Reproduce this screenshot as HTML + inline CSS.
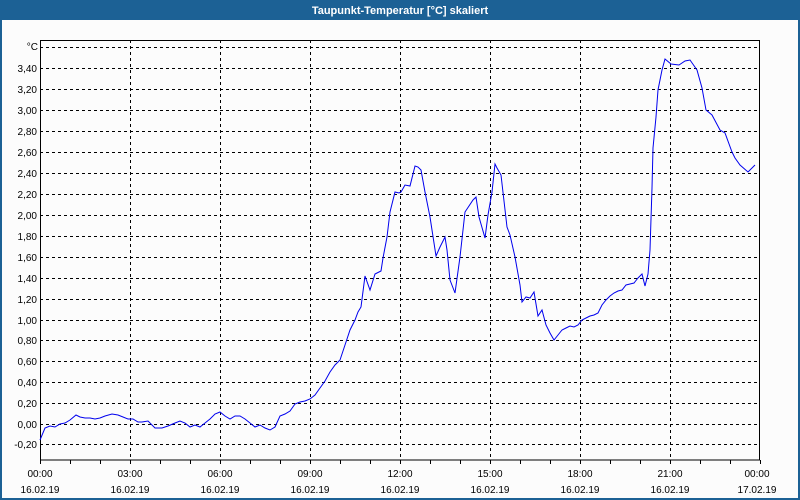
<!DOCTYPE html>
<html><head><meta charset="utf-8"><style>
html,body{margin:0;padding:0;width:800px;height:500px;overflow:hidden;background:#1c6195}
svg{display:block}
text{font-family:"Liberation Sans","DejaVu Sans",sans-serif;font-size:10px;fill:#000}
</style></head><body>
<svg width="800" height="500" viewBox="0 0 800 500">
<rect x="0" y="0" width="800" height="500" fill="#1c6195"/>
<rect x="2" y="20" width="796" height="478" fill="#fcfcfc"/>
<text x="400" y="14" text-anchor="middle" style="font-size:11px;font-weight:bold;fill:#fff">Taupunkt-Temperatur [°C] skaliert</text>
<g stroke="#000" stroke-width="1" stroke-dasharray="3,3" fill="none" shape-rendering="crispEdges">
<line x1="40" y1="47.5" x2="760" y2="47.5"/>
<line x1="40" y1="68.5" x2="760" y2="68.5"/>
<line x1="40" y1="89.5" x2="760" y2="89.5"/>
<line x1="40" y1="110.5" x2="760" y2="110.5"/>
<line x1="40" y1="131.5" x2="760" y2="131.5"/>
<line x1="40" y1="152.5" x2="760" y2="152.5"/>
<line x1="40" y1="173.5" x2="760" y2="173.5"/>
<line x1="40" y1="194.5" x2="760" y2="194.5"/>
<line x1="40" y1="215.5" x2="760" y2="215.5"/>
<line x1="40" y1="236.5" x2="760" y2="236.5"/>
<line x1="40" y1="257.5" x2="760" y2="257.5"/>
<line x1="40" y1="278.5" x2="760" y2="278.5"/>
<line x1="40" y1="299.5" x2="760" y2="299.5"/>
<line x1="40" y1="320.5" x2="760" y2="320.5"/>
<line x1="40" y1="340.5" x2="760" y2="340.5"/>
<line x1="40" y1="361.5" x2="760" y2="361.5"/>
<line x1="40" y1="382.5" x2="760" y2="382.5"/>
<line x1="40" y1="403.5" x2="760" y2="403.5"/>
<line x1="40" y1="424.5" x2="760" y2="424.5"/>
<line x1="40" y1="444.5" x2="760" y2="444.5"/>
<line x1="130.5" y1="40" x2="130.5" y2="460"/>
<line x1="220.5" y1="40" x2="220.5" y2="460"/>
<line x1="310.5" y1="40" x2="310.5" y2="460"/>
<line x1="400.5" y1="40" x2="400.5" y2="460"/>
<line x1="490.5" y1="40" x2="490.5" y2="460"/>
<line x1="580.5" y1="40" x2="580.5" y2="460"/>
<line x1="670.5" y1="40" x2="670.5" y2="460"/>
</g>
<g stroke="#000" stroke-width="1" fill="none" shape-rendering="crispEdges">
<rect x="40.5" y="40.5" width="719" height="419.5"/>
<path d="M40.5 460v4M70.5 460v4M100.5 460v4M130.5 460v4M160.5 460v4M190.5 460v4M220.5 460v4M250.5 460v4M280.5 460v4M310.5 460v4M340.5 460v4M370.5 460v4M400.5 460v4M430.5 460v4M460.5 460v4M490.5 460v4M520.5 460v4M550.5 460v4M580.5 460v4M610.5 460v4M640.5 460v4M670.5 460v4M700.5 460v4M730.5 460v4M760.5 460v4"/>
</g>
<polyline fill="none" stroke="#0000ee" stroke-width="1" points="40,440 45,428 50,426 55,427 60,424 65,423 70,420 76,415 80,417 85,418 90,418 95,419 100,418 105,416 112,414 118,415 123,417 128,419 133,419 138,422 142,422 148,421 155,428 162,428 168,426 175,423 180,421 185,423 190,427 195,425 200,427 205,423 210,419 215,414 220,412 225,416 230,419 235,416 240,416 245,419 250,423 255,427 260,425 265,428 270,430 275,427 280,416 285,414 290,411 295,404 300,402 305,401 310,399 315,395 320,388 325,381 330,372 335,365 340,360 345,345 350,330 355,320 358,312 361,307 365,276 370,290 375,274 377,273 381,271 383,258 387,237 390,212 395,192 399,193 401,192 405,185 410,186 415,166 418,167 421,170 425,192 430,217 436,256 440,247 445,237 447,250 450,280 455,293 460,257 465,212 473,200 476,197 479,217 485,238 488,215 492,192 495,164 497,168 501,175 507,227 510,235 515,257 520,285 522,302 526,297 530,298 534,292 538,316 542,310 546,325 550,333 554,340 558,335 562,330 566,328 570,326 574,327 578,325 582,320 586,318 590,316 594,315 598,313 602,305 606,300 610,296 614,293 618,291 622,290 626,285 630,284 634,283 638,278 642,274 645,286 648,274 650,250 652,188 653,148 656,117 658,90 662,70 665,59 671,64 679,65 685,61 690,60 697,70 702,88 706,110 712,115 720,130 725,133 732,152 735,158 740,165 748,172 755,165"/>
<g text-anchor="end">
<text x="38" y="50">°C</text>
<text x="37" y="72">3,40</text>
<text x="37" y="93">3,20</text>
<text x="37" y="114">3,00</text>
<text x="37" y="135">2,80</text>
<text x="37" y="156">2,60</text>
<text x="37" y="177">2,40</text>
<text x="37" y="198">2,20</text>
<text x="37" y="219">2,00</text>
<text x="37" y="240">1,80</text>
<text x="37" y="261">1,60</text>
<text x="37" y="282">1,40</text>
<text x="37" y="303">1,20</text>
<text x="37" y="324">1,00</text>
<text x="37" y="344">0,80</text>
<text x="37" y="365">0,60</text>
<text x="37" y="386">0,40</text>
<text x="37" y="407">0,20</text>
<text x="37" y="428">0,00</text>
<text x="37" y="448">-0,20</text>
</g>
<g text-anchor="middle">
<text x="40" y="477">00:00</text><text x="40" y="493">16.02.19</text>
<text x="130" y="477">03:00</text><text x="130" y="493">16.02.19</text>
<text x="220" y="477">06:00</text><text x="220" y="493">16.02.19</text>
<text x="310" y="477">09:00</text><text x="310" y="493">16.02.19</text>
<text x="400" y="477">12:00</text><text x="400" y="493">16.02.19</text>
<text x="490" y="477">15:00</text><text x="490" y="493">16.02.19</text>
<text x="580" y="477">18:00</text><text x="580" y="493">16.02.19</text>
<text x="670" y="477">21:00</text><text x="670" y="493">16.02.19</text>
<text x="757" y="477">00:00</text><text x="757" y="493">17.02.19</text>
</g>
</svg>
</body></html>
